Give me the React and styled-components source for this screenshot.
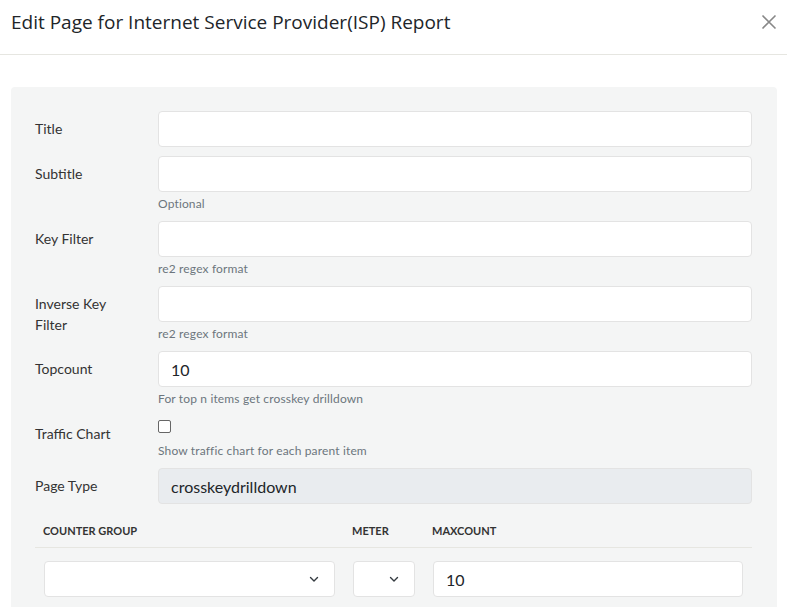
import React from 'react'
import styled, { createGlobalStyle } from 'styled-components'

const GlobalStyle = createGlobalStyle`
  * { box-sizing: border-box; }
  body {
    margin: 0;
    background: #fff;
    font-family: Lato, "Noto Sans", sans-serif;
    color: #333;
  }
`

const fields = [
  { label: 'Title', value: '' },
  { label: 'Subtitle', value: '', help: 'Optional' },
  { label: 'Key Filter', value: '', help: 're2 regex format' },
  { label: 'Inverse Key Filter', value: '', help: 're2 regex format' },
  { label: 'Topcount', value: '10', help: 'For top n items get crosskey drilldown' },
]

const Chevron = () => (
  <svg width="12" height="12" viewBox="0 0 12 12" fill="none">
    <path d="M2.5 4.5l3.5 3.5 3.5-3.5" stroke="#343a40" strokeWidth="1.4" strokeLinecap="round" strokeLinejoin="round" />
  </svg>
)

const App = () => {
  return (
    <Modal>
      <GlobalStyle />
      <Header>
        <Title>Edit Page for Internet Service Provider(ISP) Report</Title>
        <Close aria-label="close">
          <svg width="16" height="16" viewBox="0 0 16 16" fill="none">
            <path d="M1.5 1.5l13 13M14.5 1.5l-13 13" stroke="#888" strokeWidth="1.6" />
          </svg>
        </Close>
      </Header>
      <Body>
        <Panel>
          {fields.map(f => (
            <FormRow key={f.label}>
              <Label>{f.label}</Label>
              <Field>
                <Input defaultValue={f.value} />
                {f.help && <Help>{f.help}</Help>}
              </Field>
            </FormRow>
          ))}
          <FormRow>
            <Label>Traffic Chart</Label>
            <Field>
              <Check type="checkbox" />
              <Help>Show traffic chart for each parent item</Help>
            </Field>
          </FormRow>
          <FormRow>
            <Label>Page Type</Label>
            <Field>
              <Input readOnly disabledLook value="crosskeydrilldown" />
            </Field>
          </FormRow>

          <Table>
            <thead>
              <tr>
                <Th width="309px">Counter Group</Th>
                <Th width="80px">Meter</Th>
                <Th>Maxcount</Th>
              </tr>
            </thead>
            <tbody>
              <tr>
                <Td>
                  <Select><Chevron /></Select>
                </Td>
                <Td>
                  <Select><Chevron /></Select>
                </Td>
                <Td>
                  <Input defaultValue="10" />
                </Td>
              </tr>
            </tbody>
          </Table>
        </Panel>
      </Body>
    </Modal>
  )
}

const Modal = styled.div`
  width: 787px;
  height: 607px;
  overflow: hidden;
  background: #fff;
`

const Header = styled.div`
  display: flex;
  align-items: center;
  justify-content: space-between;
  height: 55px;
  padding: 0 10px 0 11px;
  border-bottom: 1px solid #e6e6e1;
`

const Title = styled.h5`
  margin: -10px 0 0;
  font-family: "Open Sans", Lato, sans-serif;
  font-size: 19px;
  font-weight: 400;
  color: #212529;
`

const Close = styled.button`
  display: flex;
  border: 0;
  background: none;
  padding: 0;
  margin-top: -10px;
  cursor: pointer;
`

const Body = styled.div`
  padding: 32px 10px 0 11px;
`

const Panel = styled.div`
  background: #f4f5f5;
  border-radius: 4px;
  padding: 24px 25px 20px 24px;
`

const FormRow = styled.div`
  display: flex;
  margin-bottom: 9px;
`

const Label = styled.label`
  width: 123px;
  flex-shrink: 0;
  padding: 7px 24px 0 0;
  font-size: 14px;
  line-height: 21px;
  color: #333;
`

const Field = styled.div`
  flex: 1;
  display: flex;
  flex-direction: column;
`

const Input = styled.input.withConfig({ shouldForwardProp: p => p !== 'disabledLook' })`
  height: 36px;
  width: 100%;
  border: 1px solid #e3e3e3;
  border-radius: 4px;
  background: ${p => (p.disabledLook ? '#e9ecef' : '#fff')};
  padding: 0 12px;
  font-family: inherit;
  font-size: 16px;
  color: #212529;
  outline: none;
`

const Help = styled.small`
  display: block;
  margin-top: 4px;
  font-size: 12px;
  line-height: 16px;
  color: #6c757d;
  letter-spacing: 0.15px;
`

const Check = styled.input`
  width: 13px;
  height: 13px;
  margin: 4px 0 6px 0;
  appearance: none;
  border: 1px solid #666;
  border-radius: 2px;
  background: #fff;
`

const Table = styled.table`
  width: 100%;
  border-collapse: collapse;
  margin-top: 4px;
`

const Th = styled.th`
  width: ${p => p.width || 'auto'};
  text-align: left;
  padding: 11px 8px 10px;
  font-size: 11px;
  font-weight: 700;
  text-transform: uppercase;
  color: #333;
  border-bottom: 1px solid #e6e6e1;
`

const Td = styled.td`
  padding: 13px 9px 0;
  vertical-align: top;
`

const Select = styled.div`
  height: 36px;
  border: 1px solid #e3e3e3;
  border-radius: 4px;
  background: #fff;
  display: flex;
  align-items: center;
  justify-content: flex-end;
  padding-right: 14px;
`

export default App
